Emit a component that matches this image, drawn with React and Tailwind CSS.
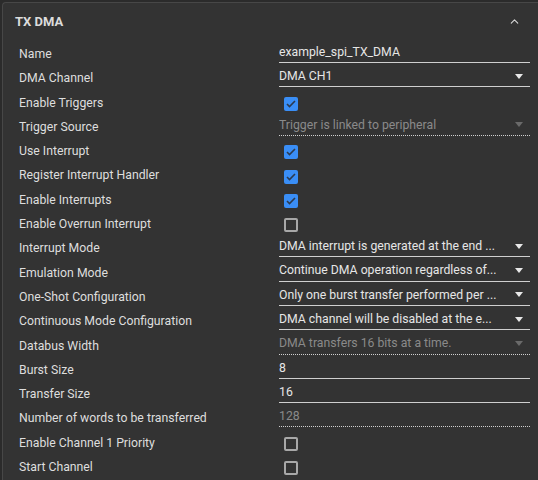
import { ChevronUp } from "lucide-react";

const rows = [
  { label: "Name", kind: "text", value: "example_spi_TX_DMA" },
  { label: "DMA Channel", kind: "select", value: "DMA CH1" },
  { label: "Enable Triggers", kind: "check", checked: true },
  { label: "Trigger Source", kind: "select", value: "Trigger is linked to peripheral", disabled: true },
  { label: "Use Interrupt", kind: "check", checked: true },
  { label: "Register Interrupt Handler", kind: "check", checked: true },
  { label: "Enable Interrupts", kind: "check", checked: true },
  { label: "Enable Overrun Interrupt", kind: "check", checked: false },
  { label: "Interrupt Mode", kind: "select", value: "DMA interrupt is generated at the end ..." },
  { label: "Emulation Mode", kind: "select", value: "Continue DMA operation regardless of..." },
  { label: "One-Shot Configuration", kind: "select", value: "Only one burst transfer performed per ..." },
  { label: "Continuous Mode Configuration", kind: "select", value: "DMA channel will be disabled at the e..." },
  { label: "Databus Width", kind: "select", value: "DMA transfers 16 bits at a time.", disabled: true },
  { label: "Burst Size", kind: "text", value: "8" },
  { label: "Transfer Size", kind: "text", value: "16" },
  { label: "Number of words to be transferred", kind: "text", value: "128", disabled: true },
  { label: "Enable Channel 1 Priority", kind: "check", checked: false },
  { label: "Start Channel", kind: "check", checked: false },
];

const Caret = ({ disabled }) => (
  <svg width="8" height="5" viewBox="0 0 8 5" className="shrink-0">
    <path d="M0 0h8L4 5z" fill={disabled ? "#6a6a6a" : "#e8e8e8"} />
  </svg>
);

const Check = ({ checked }) =>
  checked ? (
    <span className="flex h-[14px] w-[14px] items-center justify-center rounded-[2px] bg-[#3a8ef6]">
      <svg width="10" height="8" viewBox="0 0 10 8">
        <path d="M1 4l2.5 2.5L9 1" fill="none" stroke="#2b3a4f" strokeWidth="1.6" />
      </svg>
    </span>
  ) : (
    <span className="h-[14px] w-[14px] rounded-[2px] border-2 border-[#a8a8a8]" />
  );

const Field = ({ row }) => {
  if (row.kind === "check") {
    return (
      <div className="flex h-full items-center pl-[5px] pt-[1px]">
        <Check checked={row.checked} />
      </div>
    );
  }
  const line = row.disabled
    ? "border-b border-dotted border-[#d0d0d0]"
    : "border-b border-[#cfcfcf]";
  return (
    <div className={`flex h-[20px] items-center pb-[1px] ${line}`}>
      <span
        className={`flex-1 truncate ${row.disabled ? "text-[#8a8a8a]" : "text-[#e6e6e6]"}`}
      >
        {row.value}
      </span>
      {row.kind === "select" && (
        <span className="mr-[7px]">
          <Caret disabled={row.disabled} />
        </span>
      )}
    </div>
  );
};

export default function App() {
  return (
    <div
      className="h-[480px] w-[538px] overflow-hidden bg-[#2b2b2b] pl-[2px] pt-[2px] text-[12.25px]"
      style={{ fontFamily: "Roboto, 'Liberation Sans', sans-serif" }}
    >
      <div className="h-full rounded-tl-[4px] border-l border-t border-[#474747] bg-[#333333]">
        <div className="flex h-[37px] items-center justify-between pl-[12px] pr-[17px]">
          <span className="text-[13px] font-bold text-[#dcdcdc]">TX DMA</span>
          <ChevronUp className="h-[13px] w-[13px] text-[#d8d8d8]" strokeWidth={2} />
        </div>
        <div className="pl-[16px] pr-[8px] pt-[2px]">
          {rows.map((row) => (
            <div key={row.label} className="flex h-[24.3px] items-center">
              <span className="w-[260px] shrink-0 text-[#dedede]">{row.label}</span>
              <div className="h-full flex-1 pt-[1px]">
                <Field row={row} />
              </div>
            </div>
          ))}
        </div>
      </div>
    </div>
  );
}
